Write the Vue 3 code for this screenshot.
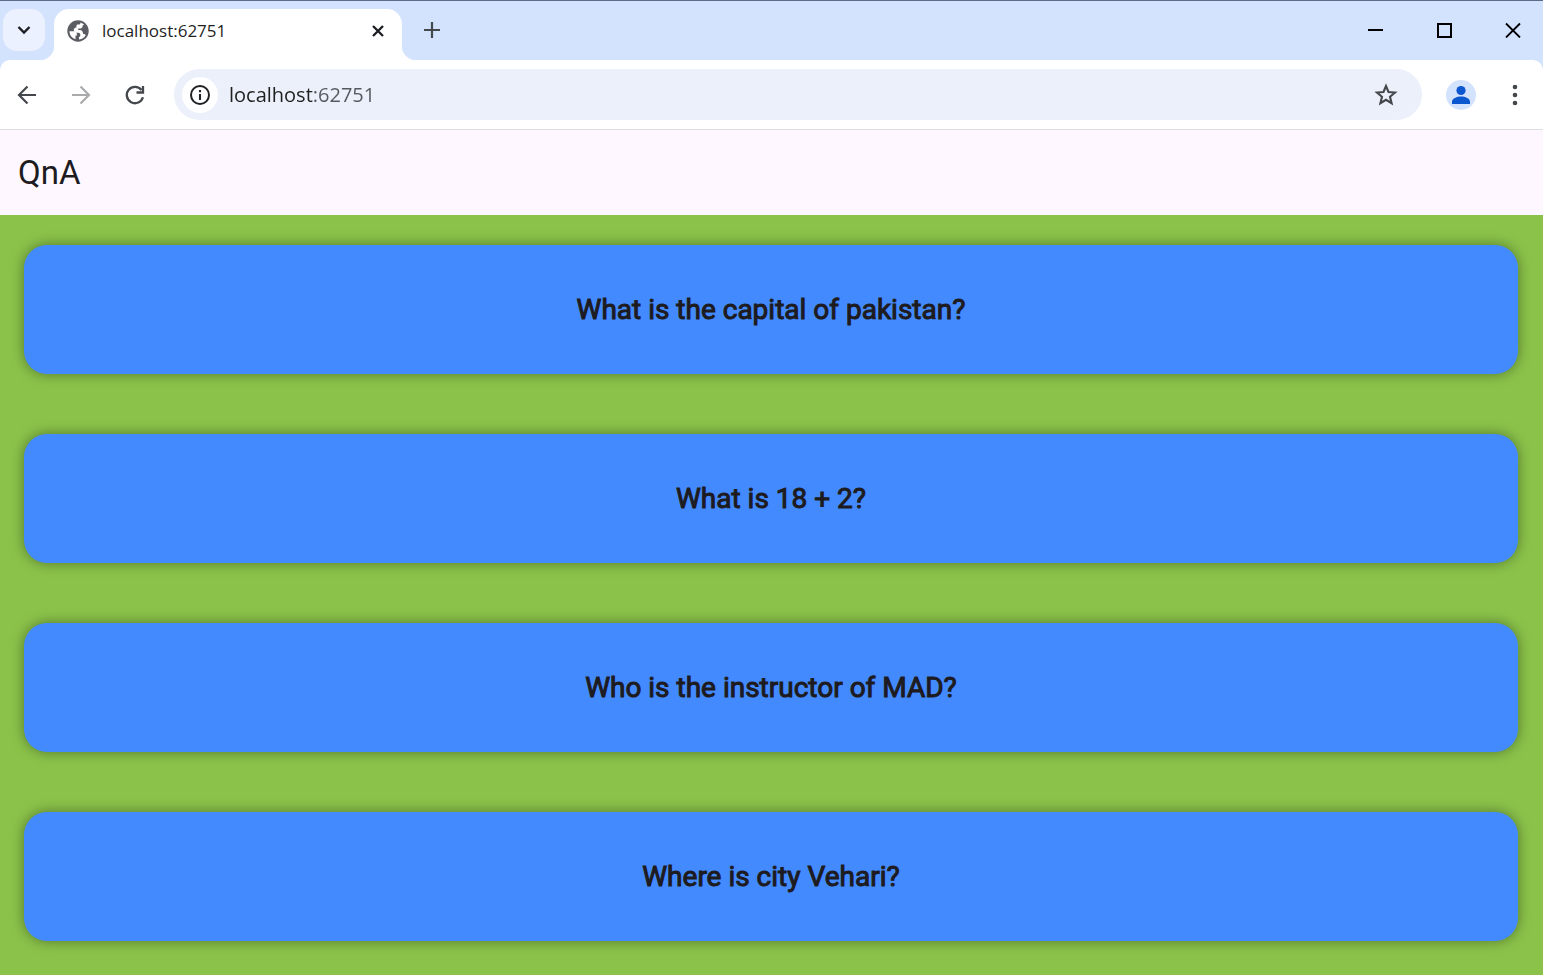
<script setup>
import { ref } from 'vue'

const address = ref('localhost:62751')
const questions = [
  'What is the capital of pakistan?',
  'What is 18 + 2?',
  'Who is the instructor of MAD?',
  'Where is city Vehari?',
]
</script>

<template>
  <div class="window">
    <header class="tabstrip">
      <button class="search-tabs" aria-label="Search tabs">
        <svg width="14" height="10" viewBox="0 0 14 10"><path d="M1.500 2 7 7.500 12.500 2" fill="none" stroke="#1b1d22" stroke-width="2.400" /></svg>
      </button>
      <div class="tab">
        <svg class="globe" width="24" height="24" viewBox="0 0 24 24">
          <circle cx="12" cy="12" r="10.700" fill="#5a5e63" />
          <path fill="#fff" d="M14.500 3.600c1.500.5 2.700 1.200 3.700 2.200-1.100.2-1.700.8-1.700 1.700 0 1.100-.8 1.900-1.900 1.900h-2.400v1.700h1.600c1.900 0 3.200 1.300 3.200 3.200v.8h1.500l1.200 1.200A8.700 8.700 0 0 1 13 20.600v-2.300l1.300-1.400v-1.200c0-1.100-.7-1.900-1.900-1.900h-1.600c-1.700 0-3-1.100-3-2.700 0-1.500 1-2.500 2.600-2.500V7.200c0-1 .6-1.700 1.700-1.700h1.300c.7 0 1.100-.6 1.100-1.900z" />
          <path fill="#fff" d="M3.400 12.300h4.300c1.900 0 3.200 1.200 3.200 2.900v1.300H9.500v3.700a8.600 8.600 0 0 1-6.100-7.900z" />
        </svg>
        <span class="tab-title">localhost:62751</span>
        <button class="close-tab" aria-label="Close tab">
          <svg width="14" height="14" viewBox="0 0 14 14"><path d="m2 2 10 10M12 2 2 12" stroke="#1b1d22" stroke-width="2.300" /></svg>
        </button>
      </div>
      <button class="new-tab" aria-label="New tab">
        <svg width="16" height="16" viewBox="0 0 16 16"><path d="M8 0v16M0 8h16" stroke="#44474b" stroke-width="2.200" /></svg>
      </button>
      <div class="window-controls">
        <button aria-label="Minimize"><svg width="16" height="16" viewBox="0 0 16 16"><path d="M0 8h15" stroke="#000" stroke-width="2" /></svg></button>
        <button aria-label="Maximize"><svg width="16" height="16" viewBox="0 0 16 16"><path d="M1 2h13v13H1z" fill="none" stroke="#000" stroke-width="2" /></svg></button>
        <button aria-label="Close"><svg width="16" height="16" viewBox="0 0 16 16"><path d="m1 1.500 14 14M15 1.500l-14 14" stroke="#000" stroke-width="1.800" /></svg></button>
      </div>
    </header>

    <nav class="toolbar" aria-label="Browser toolbar">
      <div class="nav-buttons">
        <button aria-label="Back"><svg width="20" height="20" viewBox="0 0 20 20"><path d="M19 10H2.500M10.500 1.500 2 10l8.500 8.500" fill="none" stroke="#44474b" stroke-width="2.200" /></svg></button>
        <button aria-label="Forward" disabled><svg width="20" height="20" viewBox="0 0 20 20"><path d="M1 10h16.500M9.500 1.500 18 10l-8.500 8.500" fill="none" stroke="#a9abad" stroke-width="2.200" /></svg></button>
        <button aria-label="Reload"><svg width="20" height="20" viewBox="0 0 20 20"><path d="M17.900 12.200A8.200 8.200 0 1 1 16.500 5M18 1v6.500h-6.500" fill="none" stroke="#44474b" stroke-width="2.300" /></svg></button>
      </div>
      <div class="omnibox">
        <button class="site-info" aria-label="View site information">
          <svg width="22" height="22" viewBox="0 0 22 22"><circle cx="11" cy="11" r="9" fill="none" stroke="#1f2124" stroke-width="2" /><path d="M11 10v6M11 6v2.200" stroke="#1f2124" stroke-width="2.100" /></svg>
        </button>
        <input v-model="address" class="address" type="text" aria-label="Address" spellcheck="false" />
        <button class="bookmark" aria-label="Bookmark this tab">
          <svg width="24" height="24" viewBox="0 0 24 24"><path d="m12 3 2.500 6 6.500.5-5 4.300 1.600 6.400L12 16.800l-5.600 3.400L8 13.800 3 9.500l6.500-.5z" fill="none" stroke="#44474b" stroke-width="2.100" /></svg>
        </button>
      </div>
      <button class="profile" aria-label="Profile">
        <svg width="30" height="30" viewBox="0 0 30 30"><circle cx="15" cy="15" r="15" fill="#d3e2fd" /><circle cx="15" cy="10.500" r="4.600" fill="#0b57d0" /><path d="M6 24v-2.500C6 18.500 11 16.500 15 16.500s9 2 9 5V24z" fill="#0b57d0" /></svg>
      </button>
      <button class="menu" aria-label="Menu">
        <svg width="6" height="22" viewBox="0 0 6 22" fill="#44474b"><circle cx="3" cy="3" r="2.300" /><circle cx="3" cy="11" r="2.300" /><circle cx="3" cy="19" r="2.300" /></svg>
      </button>
    </nav>

    <div class="app-bar"><h1>QnA</h1></div>
    <main class="questions">
      <button v-for="question in questions" :key="question" class="card">{{ question }}</button>
    </main>
  </div>
</template>

<style>
body { margin: 0; }
</style>

<style scoped>
* { box-sizing: border-box; }
button {
  display: flex;
  align-items: center;
  justify-content: center;
  flex: none;
  padding: 0;
  border: 0;
  background: none;
}
svg { display: block; flex: none; }
.window {
  display: flex;
  flex-direction: column;
  min-height: 100vh;
  background: #d3e2fd;
  font-family: "Open Sans", "Noto Sans", sans-serif;
}
.tabstrip {
  display: flex;
  height: 60px;
  padding: 8px 0 0 3px;
  border-top: 1px solid #5d6b88;
}
.search-tabs {
  width: 42px;
  height: 42px;
  border-radius: 14px;
  background: #ebf1fe;
}
.tab {
  position: relative;
  display: flex;
  align-items: center;
  width: 348px;
  margin-left: 9px;
  padding: 0 16px 8px 12px;
  border-radius: 15px 15px 0 0;
  background: #fff;
}
.tab::before,
.tab::after {
  content: "";
  position: absolute;
  bottom: 0;
  width: 15px;
  height: 15px;
}
.tab::before {
  right: 100%;
  background: radial-gradient(circle at 0 0, transparent 15px, #fff 16px);
}
.tab::after {
  left: 100%;
  background: radial-gradient(circle at 100% 0, transparent 15px, #fff 16px);
}
.tab-title {
  flex: 1;
  margin-left: 12px;
  color: #1f1f1f;
  font-size: 17px;
  line-height: 24px;
}
.close-tab { width: 16px; height: 16px; }
.new-tab {
  width: 42px;
  height: 42px;
  margin-left: 9px;
}
.window-controls {
  display: flex;
  height: 42px;
  margin-left: auto;
}
.window-controls button { width: 69px; }
.window-controls button:last-child { width: 64px; padding-left: 4px; }
.toolbar {
  display: flex;
  align-items: center;
  height: 70px;
  padding: 0 13px 0 6px;
  border-bottom: 1px solid #dddfe3;
  border-radius: 10px 10px 0 0;
  background: #fff;
}
.nav-buttons { display: flex; gap: 12px; }
.nav-buttons button { width: 42px; height: 42px; }
.omnibox {
  display: flex;
  flex: 1;
  align-items: center;
  height: 51px;
  margin-left: 18px;
  padding: 0 24px 0 8px;
  border-radius: 26px;
  background: #ebf0fa;
}
.site-info {
  width: 36px;
  height: 36px;
  border-radius: 50%;
  background: #fff;
}
.address {
  flex: 1;
  min-width: 0;
  height: 30px;
  margin-left: 11px;
  padding: 0;
  border: 0;
  outline: 0;
  background: linear-gradient(90deg, #1f1f1f 84px, #55585d 84px) text;
  color: transparent;
  font: 20px/30px "Open Sans", "Noto Sans", sans-serif;
}
.profile { margin-left: 24px; }
.menu { width: 30px; margin-left: 24px; }
.app-bar {
  display: flex;
  align-items: center;
  height: 85px;
  padding: 0 18px;
  background: #fef7ff;
}
h1 {
  margin: 0;
  color: #1d1b20;
  font: 400 33px/42px Roboto, sans-serif;
}
.questions {
  display: flex;
  flex: 1;
  flex-direction: column;
  gap: 60px;
  padding: 30px 25px 30px 24px;
  background: #8bc34a;
}
.card {
  height: 129px;
  border-radius: 23px;
  background: #448aff;
  box-shadow: 0 0 14px rgba(0, 0, 0, 0.4);
  color: #1d1b20;
  font: 400 28px/36px Roboto, sans-serif;
  -webkit-text-stroke: 1px #1d1b20;
}
</style>
